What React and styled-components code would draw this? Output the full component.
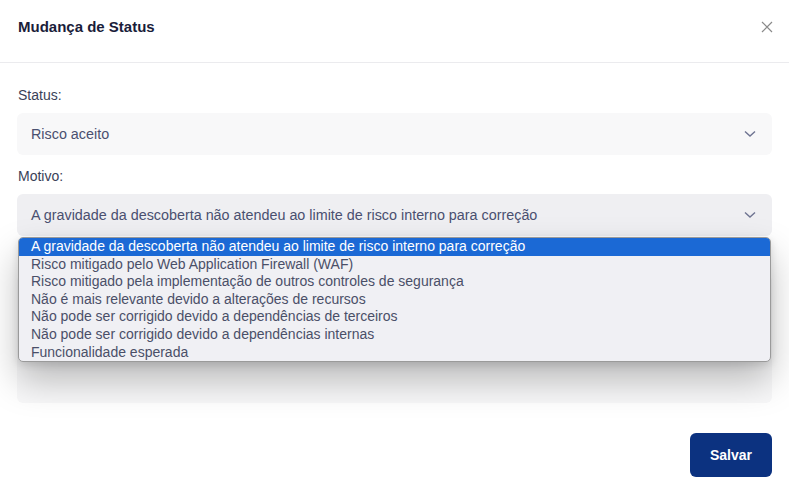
import React from "react";
import styled, { createGlobalStyle } from "styled-components";

const Global = createGlobalStyle`
  html, body { margin: 0; padding: 0; background: #ffffff; }
  body { font-family: "Liberation Sans", Arial, sans-serif; }
  * { box-sizing: border-box; }
`;

const Modal = styled.div`
  width: 789px;
  min-height: 494px;
  background: #fff;
  display: flex;
  flex-direction: column;
`;

const Header = styled.div`
  height: 63px;
  display: flex;
  align-items: flex-start;
  justify-content: space-between;
  padding: 18px 15px 0 18px;
  border-bottom: 1px solid #ebebee;
`;

const Title = styled.h2`
  margin: 0;
  font-size: 15px;
  line-height: 18px;
  font-weight: 700;
  color: #1a1d3a;
`;

const CloseBtn = styled.button`
  border: 0;
  background: transparent;
  padding: 0;
  margin-top: 2px;
  width: 14px;
  height: 14px;
  display: flex;
  cursor: pointer;
`;

const Body = styled.div`
  padding: 22px 17px 0 17px;
  display: flex;
  flex-direction: column;
`;

const Field = styled.div`
  display: flex;
  flex-direction: column;
  margin-top: ${(p) => p.$mt || 0}px;
`;

const Label = styled.label`
  font-size: 14px;
  line-height: 20px;
  color: #3a3f58;
  margin: 0 0 8px 1px;
`;

const SelectWrap = styled.div`
  position: relative;
`;

const SelectBox = styled.div`
  height: 42px;
  border-radius: 6px;
  background: ${(p) => (p.$active ? "#efeff2" : "#f8f8f9")};
  display: flex;
  align-items: center;
  justify-content: space-between;
  padding: 0 16px 0 14px;
  font-size: 14.35px;
  color: #4a5070;
`;

const Options = styled.ul`
  position: absolute;
  top: calc(100% + 1px);
  left: 1px;
  right: 1px;
  margin: 0;
  padding: 0;
  list-style: none;
  background: #f0f0f4;
  border: 1px solid #9a9a9a;
  border-radius: 5px;
  overflow: hidden;
  box-shadow: 0 18px 36px rgba(0, 0, 0, 0.26), 0 3px 8px rgba(0, 0, 0, 0.12);
  z-index: 5;
`;

const Option = styled.li`
  height: 17.6px;
  line-height: 17.6px;
  padding-left: 12px;
  font-size: 14px;
  white-space: nowrap;
  color: ${(p) => (p.$selected ? "#ffffff" : "#4a4f68")};
  background: ${(p) => (p.$selected ? "#1b69d5" : "transparent")};
`;

const TextArea = styled.div`
  height: 128px;
  border-radius: 6px;
  background: #f8f8f9;
`;

const Footer = styled.div`
  display: flex;
  justify-content: flex-end;
  padding: 30px 17px 17px;
`;

const SaveButton = styled.button`
  width: 82px;
  height: 44px;
  border: 0;
  border-radius: 6px;
  background: #0c3280;
  color: #fff;
  font-family: "Liberation Sans", Arial, sans-serif;
  font-size: 14px;
  font-weight: 700;
  cursor: pointer;
`;

const Chevron = () => (
  <svg width="12" height="8" viewBox="0 0 12 8" fill="none">
    <polyline points="1,1.5 6,6 11,1.5" stroke="#6e7391" strokeWidth="1.4" />
  </svg>
);

const options = [
  "A gravidade da descoberta não atendeu ao limite de risco interno para correção",
  "Risco mitigado pelo Web Application Firewall (WAF)",
  "Risco mitigado pela implementação de outros controles de segurança",
  "Não é mais relevante devido a alterações de recursos",
  "Não pode ser corrigido devido a dependências de terceiros",
  "Não pode ser corrigido devido a dependências internas",
  "Funcionalidade esperada",
];

export default function App() {
  return (
    <>
      <Global />
      <Modal>
        <Header>
          <Title>Mudança de Status</Title>
          <CloseBtn aria-label="Fechar">
            <svg width="14" height="14" viewBox="0 0 14 14">
              <path d="M2 2 L12 12 M12 2 L2 12" stroke="#8a8a8a" strokeWidth="1.2" />
            </svg>
          </CloseBtn>
        </Header>
        <Body>
          <Field>
            <Label>Status:</Label>
            <SelectWrap>
              <SelectBox>
                <span>Risco aceito</span>
                <Chevron />
              </SelectBox>
            </SelectWrap>
          </Field>
          <Field $mt={11}>
            <Label>Motivo:</Label>
            <SelectWrap>
              <SelectBox $active>
                <span>{options[0]}</span>
                <Chevron />
              </SelectBox>
              <Options>
                {options.map((o, i) => (
                  <Option key={o} $selected={i === 0}>
                    {o}
                  </Option>
                ))}
              </Options>
            </SelectWrap>
          </Field>
          <Field $mt={11}>
            <Label>Comentário:</Label>
            <TextArea />
          </Field>
        </Body>
        <Footer>
          <SaveButton>Salvar</SaveButton>
        </Footer>
      </Modal>
    </>
  );
}
